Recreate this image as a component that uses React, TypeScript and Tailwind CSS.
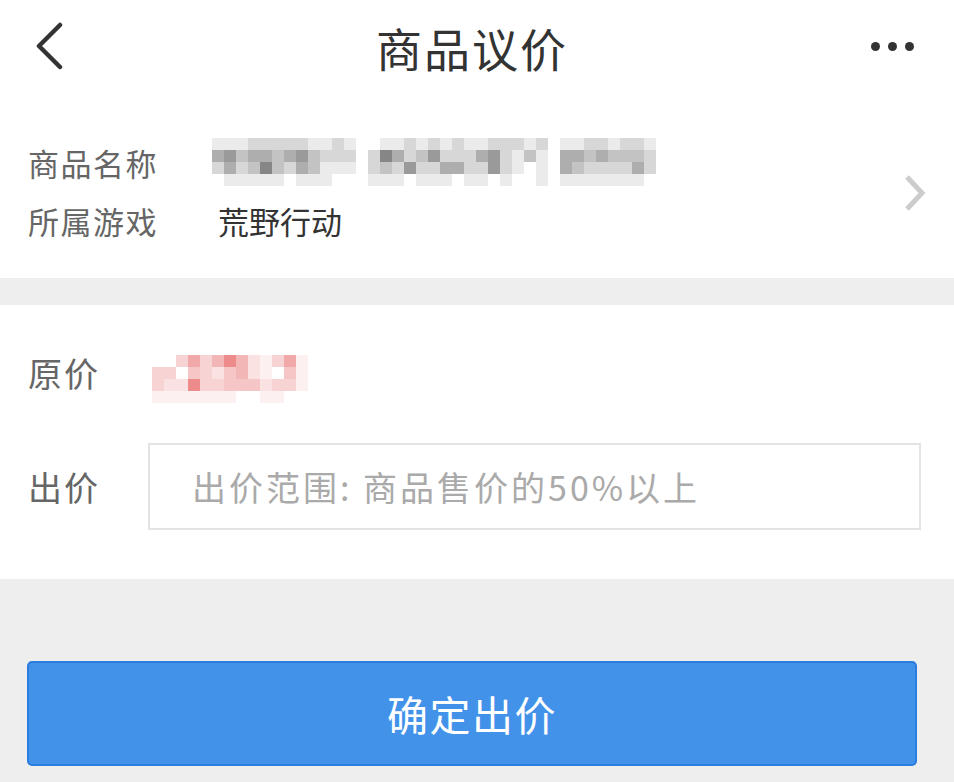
import { useState } from "react";

// pixelated (mosaic) placeholders for masked values
const nameRows = [
  ["111222221121", "011212121122212", "11221221"],
  ["453443453222", "264235222452131", "44343332"],
  ["242363243111", "232522442252101", "43222242"],
  ["011111011100", "111011101101001", "11111110"],
];

const priceRows = ["0036358521361", "3304324521041", "3228334442331", "1111111001100"];

function Mosaic({ rows, rgb, step = 0.09 }: { rows: string[]; rgb: string; step?: number }) {
  return (
    <div className="flex flex-col">
      {rows.map((row, r) => (
        <div key={r} className="flex h-[12px]">
          {row.split("").map((c, i) => (
            <div
              key={i}
              className="w-[12px] h-[12px]"
              style={{ backgroundColor: `rgba(${rgb},${Math.min(1, Number(c) * step)})` }}
            />
          ))}
        </div>
      ))}
    </div>
  );
}

function ProductNameMosaic() {
  return (
    <div className="flex gap-[12px] -ml-[6px]">
      {[0, 1, 2].map((g) => (
        <Mosaic key={g} rows={nameRows.map((r) => r[g])} rgb="100,100,100" step={0.13} />
      ))}
    </div>
  );
}

export default function App() {
  const [offer, setOffer] = useState("");

  return (
    <div className="w-[954px] h-[782px] bg-[#eeeeee] font-['Noto_Sans_CJK_SC','Noto_Sans',sans-serif] overflow-hidden">
      {/* header */}
      <div className="h-[96px] bg-white flex items-center justify-between pl-[33px] pr-[40px]">
        <svg width="32" height="50" viewBox="0 0 32 50" className="-mt-[2px]">
          <path d="M27 3 L6 24 L27 45" fill="none" stroke="#333" strokeWidth="4.5" strokeLinecap="round" strokeLinejoin="round" />
        </svg>
        <h1 className="text-[46px] leading-none text-[#333] tracking-[2px] -mt-[2px] ml-[8px]">商品议价</h1>
        <div className="flex gap-[8px] items-center -mt-[4px]">
          <span className="w-[9px] h-[9px] rounded-full bg-[#333]" />
          <span className="w-[9px] h-[9px] rounded-full bg-[#333]" />
          <span className="w-[9px] h-[9px] rounded-full bg-[#333]" />
        </div>
      </div>

      {/* product */}
      <div className="h-[182px] bg-white flex items-center pl-[28px] pr-[27px]">
        <div className="flex-1 flex flex-col pt-[8px]">
          <div className="flex items-center h-[58px]">
            <span className="w-[190px] text-[31px] text-[#666] leading-none tracking-[1.5px]">商品名称</span>
            <ProductNameMosaic />
          </div>
          <div className="flex items-center h-[58px]">
            <span className="w-[190px] text-[31px] text-[#666] leading-none tracking-[1.5px]">所属游戏</span>
            <span className="text-[31px] text-[#333] leading-none">荒野行动</span>
          </div>
        </div>
        <svg width="24" height="38" viewBox="0 0 24 38" className="mt-[12px]">
          <path d="M4 3 L19 19 L4 35" fill="none" stroke="#cccccc" strokeWidth="5" />
        </svg>
      </div>

      <div className="h-[27px]" />

      {/* offer form */}
      <div className="bg-white pt-[38px] pb-[49px] pl-[28px] pr-[33px]">
        <div className="flex items-center h-[60px]">
          <span className="w-[124px] text-[34px] text-[#666] leading-none tracking-[2px]">原价</span>
          <div className="mt-[12px]">
            <Mosaic rows={priceRows} rgb="232,110,110" step={0.1} />
          </div>
        </div>
        <div className="flex items-center mt-[40px]">
          <span className="w-[120px] text-[34px] text-[#666] leading-none tracking-[2px]">出价</span>
          <input
            value={offer}
            onChange={(e) => setOffer(e.target.value)}
            placeholder="出价范围: 商品售价的50%以上"
            className="flex-1 h-[87px] border-2 border-[#e3e3e3] pl-[42px] text-[34px] tracking-[3px] text-[#333] placeholder:text-[#aaaaaa] outline-none"
          />
        </div>
      </div>

      {/* submit */}
      <div className="pt-[82px] pl-[27px]">
        <button className="w-[890px] h-[105px] rounded-[5px] bg-[#4392ea] border-2 border-[#2b7de0] text-white text-[41px] tracking-[1.5px]">
          确定出价
        </button>
      </div>
    </div>
  );
}
